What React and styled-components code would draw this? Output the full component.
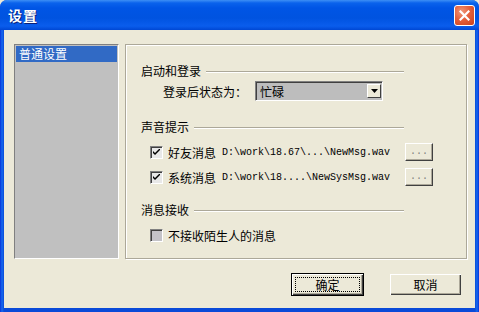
import React from "react";
import styled, { createGlobalStyle } from "styled-components";

const Global = createGlobalStyle`
  html, body { margin: 0; padding: 0; background: #ece9d8; }
  body { font-family: "Noto Sans CJK SC", "Liberation Sans", sans-serif; font-size: 12px; color: #000; }
`;

const Window = styled.div`
  width: 479px;
  height: 312px;
  display: flex;
  flex-direction: column;
  background: linear-gradient(to right, #0831d9 0px, #166aee 2px, #0a4ad8 4px, #0a4ad8 475px, #166aee 477px, #0831d9 479px);
  box-sizing: border-box;
  border-radius: 7px 7px 0 0;
  overflow: hidden;
`;

const TitleBar = styled.div`
  height: 30px;
  flex: none;
  display: flex;
  align-items: center;
  justify-content: space-between;
  padding: 0 4px 0 8px;
  background: linear-gradient(to bottom, #3d8ff5 0px, #0a62ec 3px, #0055e5 8px, #0053e0 18px, #0a5ded 26px, #0047d4 30px);
`;

const Title = styled.div`
  color: #fff;
  font-weight: bold;
  font-size: 14px;
  letter-spacing: 1px;
  text-shadow: 1px 1px 0 #0a1f78;
  margin-top: -1px;
`;

const CloseButton = styled.div`
  width: 21px;
  height: 21px;
  box-sizing: border-box;
  border: 1px solid #fff;
  border-radius: 3px;
  background: radial-gradient(circle at 35% 30%, #f0987a 0%, #e5603c 45%, #c8401c 100%);
  display: flex;
  align-items: center;
  justify-content: center;
`;

const Client = styled.div`
  flex: 1;
  margin: 0 4px 4px 4px;
  background: #ece9d8;
  display: flex;
  flex-direction: column;
  padding: 14px 8px 0 10px;
  box-sizing: border-box;
`;

const Body = styled.div`
  display: flex;
  gap: 6px;
  height: 215px;
`;

const NavList = styled.div`
  width: 105px;
  flex: none;
  box-sizing: border-box;
  background: #c0c0c0;
  border-top: 1px solid #808080;
  border-left: 1px solid #808080;
  border-bottom: 1px solid #fff;
  border-right: 1px solid #fff;
  padding: 1px 1px;
`;

const NavItem = styled.div`
  height: 16px;
  line-height: 16px;
  padding-left: 3px;
  background: ${(p) => (p.$selected ? "#316ac5" : "transparent")};
  color: ${(p) => (p.$selected ? "#fff" : "#000")};
  white-space: nowrap;
`;

const Panel = styled.div`
  flex: 1;
  min-width: 0;
  box-sizing: border-box;
  border: 1px solid #aca899;
  box-shadow: inset 1px 1px 0 #fff, 1px 1px 0 #fff;
  padding: 19px 0 0 15px;
  display: flex;
  flex-direction: column;
`;

const Header = styled.div`
  display: flex;
  align-items: center;
  gap: 5px;
  height: 14px;
  line-height: 14px;
  margin-top: ${(p) => p.$mt || 0}px;
  margin-right: 62px;
  white-space: nowrap;
`;

const Line = styled.div`
  flex: 1;
  height: 0;
  border-top: 1px solid #aca899;
  border-bottom: 1px solid #fff;
  margin-top: 2px;
`;

const Row = styled.div`
  display: flex;
  align-items: center;
  margin-top: ${(p) => p.$mt || 0}px;
  padding-left: ${(p) => p.$indent || 0}px;
  white-space: nowrap;
`;

const Label = styled.span`
  width: 92px;
  flex: none;
`;

const Combo = styled.div`
  width: 128px;
  height: 20px;
  box-sizing: border-box;
  background: #bdbdbd;
  border-top: 1px solid #808080;
  border-left: 1px solid #808080;
  border-bottom: 1px solid #fff;
  border-right: 1px solid #fff;
  box-shadow: inset 1px 1px 0 #404040;
  display: flex;
  align-items: center;
  justify-content: space-between;
  padding: 0 1px 0 4px;
`;

const ComboArrow = styled.div`
  width: 14px;
  height: 14px;
  box-sizing: border-box;
  background: #ece9d8;
  border-top: 1px solid #fff;
  border-left: 1px solid #fff;
  border-right: 1px solid #404040;
  border-bottom: 1px solid #404040;
  display: flex;
  align-items: center;
  justify-content: center;
`;

const Check = styled.div`
  width: 13px;
  height: 13px;
  flex: none;
  box-sizing: border-box;
  background: ${(p) => (p.$disabled ? "#c4c3c8" : "#e8e8e8")};
  border-top: 1px solid #808080;
  border-left: 1px solid #808080;
  border-bottom: 1px solid #fff;
  border-right: 1px solid #fff;
  box-shadow: inset 1px 1px 0 #404040;
  display: flex;
  align-items: center;
  justify-content: center;
  margin-right: 5px;
`;

const PathText = styled.span`
  font-family: "Liberation Mono", "DejaVu Sans Mono", monospace;
  font-size: 10px;
  margin-left: 6px;
  width: 183px;
  flex: none;
`;

const SmallButton = styled.div`
  width: 28px;
  height: 18px;
  flex: none;
  box-sizing: border-box;
  background: #ece9d8;
  border-top: 1px solid #fff;
  border-left: 1px solid #fff;
  border-right: 1px solid #404040;
  border-bottom: 1px solid #404040;
  box-shadow: inset -1px -1px 0 #aca899;
  color: #808080;
  font-family: "Liberation Mono", monospace;
  font-size: 10px;
  display: flex;
  align-items: center;
  justify-content: center;
  padding-bottom: 2px;
`;

const Footer = styled.div`
  display: flex;
  justify-content: flex-end;
  gap: 25px;
  margin-top: 14px;
  padding-right: 5px;
`;

const Button = styled.div`
  width: 73px;
  height: 23px;
  box-sizing: border-box;
  background: #ece9d8;
  border: 1px solid ${(p) => (p.$default ? "#000" : "transparent")};
  box-shadow: inset 1px 1px 0 #fff, inset -1px -1px 0 #404040, inset -2px -2px 0 #aca899;
  display: flex;
  align-items: center;
  justify-content: center;
  position: relative;
`;

const Focus = styled.div`
  position: absolute;
  inset: 3px;
  border: 1px dotted #000;
`;

function Checkbox({ checked, disabled }) {
  return (
    <Check $disabled={disabled}>
      {checked && (
        <svg width="7" height="7" viewBox="0 0 7 7">
          <path d="M0 2 L0 4 L2 6 L7 1 L7 -1 L2 4 Z" fill="#000" />
        </svg>
      )}
    </Check>
  );
}

export default function App() {
  return (
    <>
      <Global />
      <Window>
        <TitleBar>
          <Title>设置</Title>
          <CloseButton>
            <svg width="11" height="11" viewBox="0 0 11 11">
              <path d="M1.5 1.5 L9.5 9.5 M9.5 1.5 L1.5 9.5" stroke="#fff" strokeWidth="2.2" strokeLinecap="square" />
            </svg>
          </CloseButton>
        </TitleBar>
        <Client>
          <Body>
            <NavList>
              <NavItem $selected>普通设置</NavItem>
            </NavList>
            <Panel>
              <Header>
                启动和登录
                <Line />
              </Header>
              <Row $indent={22} $mt={3}>
                <Label>登录后状态为：</Label>
                <Combo>
                  <span>忙碌</span>
                  <ComboArrow>
                    <svg width="7" height="4" viewBox="0 0 7 4">
                      <path d="M0 0 H7 L3.5 4 Z" fill="#000" />
                    </svg>
                  </ComboArrow>
                </Combo>
              </Row>
              <Header $mt={19}>
                声音提示
                <Line />
              </Header>
              <Row $indent={9} $mt={9}>
                <Checkbox checked />
                <span>好友消息</span>
                <PathText>D:\work\18.67\...\NewMsg.wav</PathText>
                <SmallButton>...</SmallButton>
              </Row>
              <Row $indent={9} $mt={7}>
                <Checkbox checked />
                <span>系统消息</span>
                <PathText>D:\work\18....\NewSysMsg.wav</PathText>
                <SmallButton>...</SmallButton>
              </Row>
              <Header $mt={17}>
                消息接收
                <Line />
              </Header>
              <Row $indent={9} $mt={10}>
                <Checkbox disabled />
                <span>不接收陌生人的消息</span>
              </Row>
            </Panel>
          </Body>
          <Footer>
            <Button $default>
              <Focus />
              确定
            </Button>
            <Button>取消</Button>
          </Footer>
        </Client>
      </Window>
    </>
  );
}
